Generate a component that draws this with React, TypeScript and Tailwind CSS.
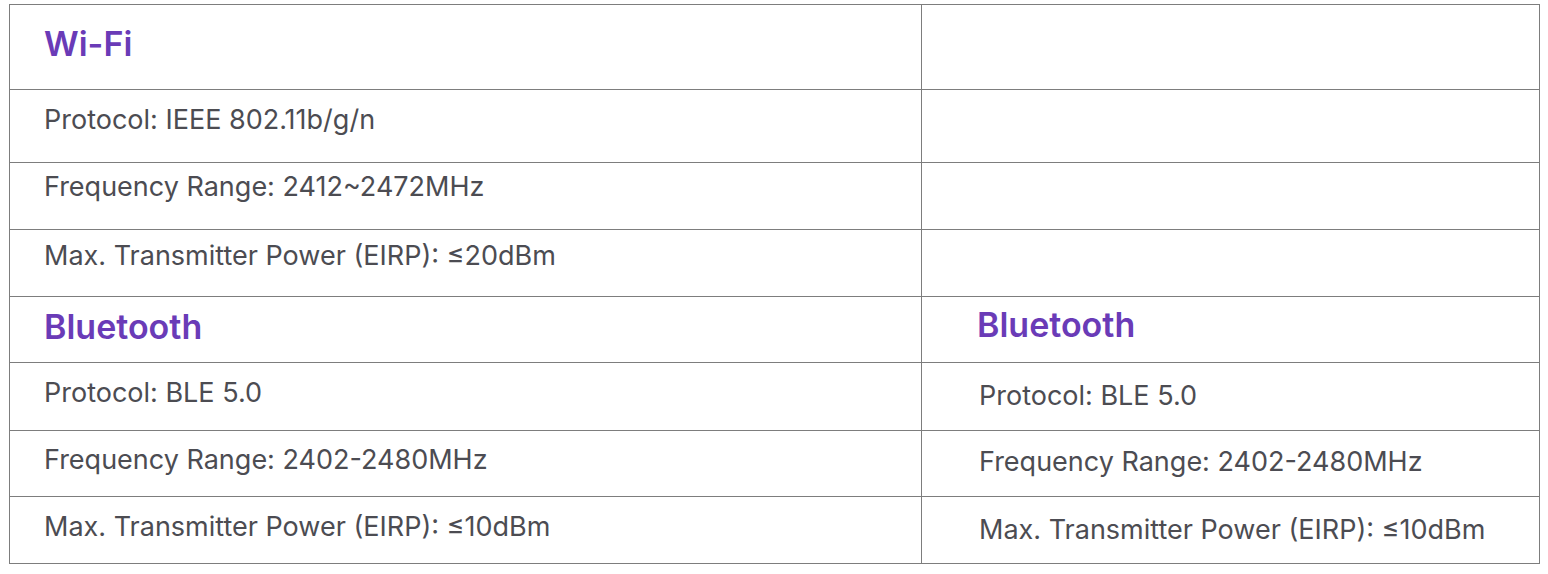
export default function App() {
    const cell = "border-r border-b border-[#7d7d7d]"
    const body = "text-[27px] leading-none text-[#4c4c52]"
    const head = "text-[34px] leading-none font-semibold text-[#6a3bb7]"
    return (
        <div className="bg-white w-[1548px] h-[574px] pt-[4px] pl-[9px]" style={{ fontFamily: "Inter, 'Noto Sans', sans-serif" }}>
            <div className="grid grid-cols-[912px_618px] border-t border-l border-[#7d7d7d] w-[1531px]">
                {/* Wi-Fi */}
                <div className={`${cell} h-[85px] pl-[34px] pt-[22px]`}>
                    <div className={head}>Wi-Fi</div>
                </div>
                <div className={`${cell} h-[85px]`}></div>

                <div className={`${cell} h-[73px] pl-[34px] pt-[16px]`}>
                    <div className={body}>Protocol: IEEE 802.11b/g/n</div>
                </div>
                <div className={`${cell} h-[73px]`}></div>

                <div className={`${cell} h-[67px] pl-[34px] pt-[10px]`}>
                    <div className={body}>Frequency Range: 2412~2472MHz</div>
                </div>
                <div className={`${cell} h-[67px]`}></div>

                <div className={`${cell} h-[67px] pl-[34px] pt-[12px]`}>
                    <div className={body}>Max. Transmitter Power (EIRP): ≤20dBm</div>
                </div>
                <div className={`${cell} h-[67px]`}></div>

                {/* Bluetooth */}
                <div className={`${cell} h-[66px] pl-[34px] pt-[13px]`}>
                    <div className={head}>Bluetooth</div>
                </div>
                <div className={`${cell} h-[66px] pl-[55px] pt-[11px]`}>
                    <div className={head}>Bluetooth</div>
                </div>

                <div className={`${cell} h-[68px] pl-[34px] pt-[16px]`}>
                    <div className={body}>Protocol: BLE 5.0</div>
                </div>
                <div className={`${cell} h-[68px] pl-[57px] pt-[19px]`}>
                    <div className={body}>Protocol: BLE 5.0</div>
                </div>

                <div className={`${cell} h-[66px] pl-[34px] pt-[15px]`}>
                    <div className={body}>Frequency Range: 2402-2480MHz</div>
                </div>
                <div className={`${cell} h-[66px] pl-[57px] pt-[17px]`}>
                    <div className={body}>Frequency Range: 2402-2480MHz</div>
                </div>

                <div className={`${cell} h-[67px] pl-[34px] pt-[16px]`}>
                    <div className={body}>Max. Transmitter Power (EIRP): ≤10dBm</div>
                </div>
                <div className={`${cell} h-[67px] pl-[57px] pt-[19px]`}>
                    <div className={body}>Max. Transmitter Power (EIRP): ≤10dBm</div>
                </div>
            </div>
        </div>
    )
}
